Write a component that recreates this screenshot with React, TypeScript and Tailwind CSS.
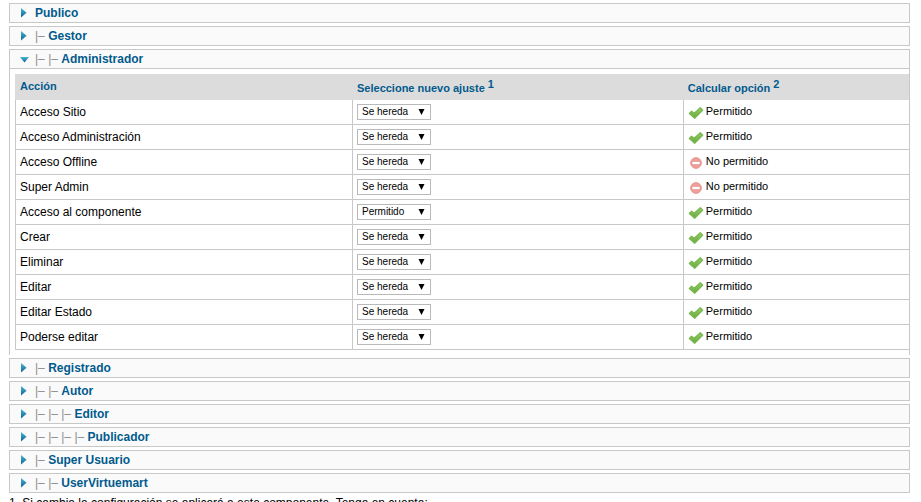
import { useState } from "react";

type Group = { name: string; level: number };

const GROUPS: Group[] = [
  { name: "Publico", level: 0 },
  { name: "Gestor", level: 1 },
  { name: "Administrador", level: 2 },
  { name: "Registrado", level: 1 },
  { name: "Autor", level: 2 },
  { name: "Editor", level: 3 },
  { name: "Publicador", level: 4 },
  { name: "Super Usuario", level: 1 },
  { name: "UserVirtuemart", level: 2 },
];

const ACTIONS = [
  { name: "Acceso Sitio", setting: "Se hereda", allowed: true },
  { name: "Acceso Administración", setting: "Se hereda", allowed: true },
  { name: "Acceso Offline", setting: "Se hereda", allowed: false },
  { name: "Super Admin", setting: "Se hereda", allowed: false },
  { name: "Acceso al componente", setting: "Permitido", allowed: true },
  { name: "Crear", setting: "Se hereda", allowed: true },
  { name: "Eliminar", setting: "Se hereda", allowed: true },
  { name: "Editar", setting: "Se hereda", allowed: true },
  { name: "Editar Estado", setting: "Se hereda", allowed: true },
  { name: "Poderse editar", setting: "Se hereda", allowed: true },
];

function Arrow({ open }: { open: boolean }) {
  return (
    <svg viewBox="0 0 10 10" className="size-[10px] shrink-0" aria-hidden="true">
      <defs>
        <linearGradient id="arrow" x1="0" y1="0" x2="0" y2="1">
          <stop offset="0" stopColor="#4db4d3" />
          <stop offset="1" stopColor="#0a6696" />
        </linearGradient>
      </defs>
      <path d={open ? "M1 3H10L5.5 8.4Z" : "M2 0V9.4L7.6 4.7Z"} fill="url(#arrow)" />
    </svg>
  );
}

function AllowedIcon() {
  return (
    <svg viewBox="0 0 16 16" className="size-4 shrink-0" aria-hidden="true">
      <defs>
        <linearGradient id="tick" x1="0" y1="0" x2="0" y2="1">
          <stop offset="0" stopColor="#92cf68" />
          <stop offset="1" stopColor="#68a93f" />
        </linearGradient>
      </defs>
      <path d="M1.3 9.5L3.6 7.2L6.2 9.3L12.3 3.7L14.8 6.2L6.7 14.3Z" fill="url(#tick)" stroke="#7ab84f" strokeWidth="1.2" strokeLinejoin="round" />
    </svg>
  );
}

function DeniedIcon() {
  return (
    <svg viewBox="0 0 16 16" className="size-4 shrink-0" aria-hidden="true">
      <circle cx="8" cy="9" r="5.4" fill="#ef9f99" stroke="#e58a85" strokeWidth=".8" />
      <rect x="4" y="7.5" width="8" height="3" rx=".7" fill="#fff" stroke="#d9837e" strokeWidth=".5" />
    </svg>
  );
}

function PermissionsTable({ group }: { group: string }) {
  return (
    <table className="w-full table-fixed border-separate border-spacing-0 text-left">
      <colgroup>
        <col className="w-[337px]" />
        <col className="w-[37%]" />
        <col />
      </colgroup>
      <thead>
        <tr className="h-[26px] bg-[#dcdcdc] text-[11px] leading-4 text-[#025a8d]">
          <th className="px-[5px] pt-0 pb-[2px]">Acción</th>
          <th className="px-[5px] pt-[2px] pb-0">Seleccione nuevo ajuste <sup className="-top-1 text-[11px]">1</sup></th>
          <th className="px-[5px] pt-[2px] pb-0">Calcular opción <sup className="-top-1 text-[11px]">2</sup></th>
        </tr>
      </thead>
      <tbody>
        {ACTIONS.map((action, i) => (
          <tr key={action.name} className="h-[25px]">
            <td className="border-b border-l border-[#c8c8c8] px-1 py-0">
              <label htmlFor={`${group}-${i}`} className="block leading-4">{action.name}</label>
            </td>
            <td className="border-b border-l border-[#c8c8c8] px-1 py-0">
              <div className="relative h-4 w-[74px]">
                <select
                  id={`${group}-${i}`}
                  defaultValue={action.setting}
                  className="block h-4 w-full appearance-none border border-[#b9b9b9] bg-white px-1 text-[10px] leading-[14px]"
                >
                  <option>Se hereda</option>
                  <option>Permitido</option>
                  <option>Denegado</option>
                </select>
                <svg viewBox="0 0 7 6" className="pointer-events-none absolute top-[5px] right-[6px] h-[6px] w-[7px]" aria-hidden="true">
                  <path d="M.5 0H6.5L3.5 6Z" />
                </svg>
              </div>
            </td>
            <td className="border-b border-l border-[#c8c8c8] px-1 py-0">
              <span className="flex items-start gap-[2px] text-[11px] leading-[15px]">
                {action.allowed ? <AllowedIcon /> : <DeniedIcon />}
                {action.allowed ? "Permitido" : "No permitido"}
              </span>
            </td>
          </tr>
        ))}
      </tbody>
    </table>
  );
}

export default function App() {
  const [open, setOpen] = useState("Administrador");

  return (
    <main className="h-screen overflow-hidden bg-white pt-[3px] pr-[11px] pl-[9px] font-['Liberation_Sans',Arial,sans-serif] text-[12px] text-black">
      {GROUPS.map(({ name, level }) => (
        <section key={name} className="mb-[3px]">
          <h3>
            <button
              type="button"
              aria-expanded={open === name}
              onClick={() => setOpen(open === name ? "" : name)}
              className="flex h-5 w-full items-center gap-[6px] border border-[#c8c8c8] bg-[#fafafa] pl-[9px] text-left leading-[18px] font-bold text-[#025a8d]"
            >
              <Arrow open={open === name} />
              <span>
                {Array.from({ length: level }, (_, i) => (
                  <span key={i} className="font-normal text-[#8c8c8c]">|– </span>
                ))}
                {name}
              </span>
            </button>
          </h3>
          {open === name && (
            <div className="border-x border-[#c8c8c8] py-[5px] pl-[5px]">
              <PermissionsTable group={name} />
            </div>
          )}
        </section>
      ))}
      <p className="leading-[14px]">1. Si cambia la configuración se aplicará a este componente. Tenga en cuenta:</p>
    </main>
  );
}
